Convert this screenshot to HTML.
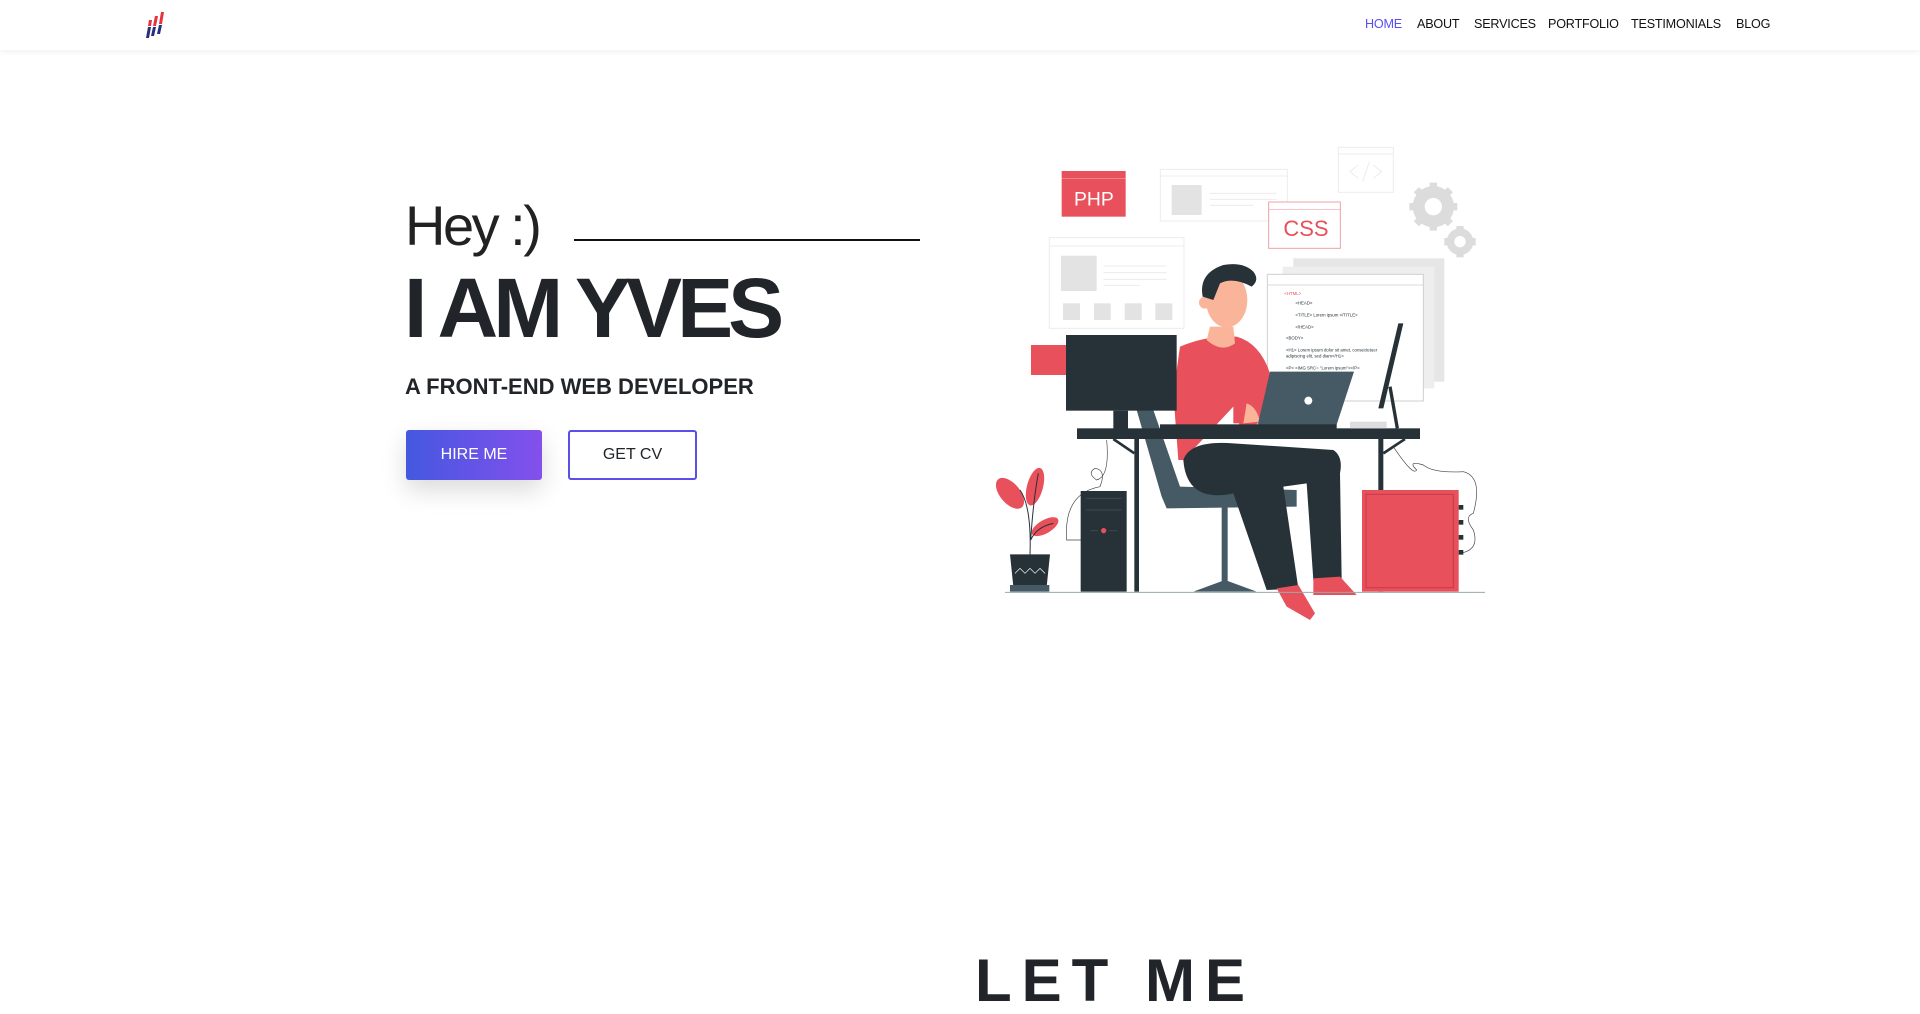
<!DOCTYPE html>
<html><head><meta charset="utf-8"><style>
*{margin:0;padding:0;box-sizing:border-box}
body{width:1920px;height:966px;overflow:hidden;background:#fff;font-family:"Liberation Sans",Arial,sans-serif;color:#212529;position:relative}
.hdr{position:absolute;left:0;top:0;width:1920px;height:50px;background:#fff;box-shadow:0 2px 6px rgba(0,0,0,.06)}
.nav a{position:absolute;top:17px;font-size:12.6px;color:#111;text-decoration:none;letter-spacing:-0.2px}
.abs{position:absolute;white-space:nowrap}
.btn{position:absolute;top:430px;height:50px;display:flex;align-items:center;justify-content:center;font-size:16px;border-radius:3px}
</style></head><body>
<div class="hdr">
<svg class="abs" style="left:146px;top:10px" width="26" height="30" viewBox="0 0 26 30">
<polygon points="3,10 6,10 5,16 2,16" fill="#e8323c"/><polygon points="9,6 12,6 10,16 7,16" fill="#e8323c"/><polygon points="15,2 18,2 16,14 13,14" fill="#e8323c"/>
<polygon points="2,17 5,17 3,28 0,28" fill="#23307a"/><polygon points="7,17 10,17 8,26 5,26" fill="#23307a"/><polygon points="13,15 16,15 14,24 11,24" fill="#23307a"/>
</svg>
<div class="nav">
<a style="left:1365px;color:#5b4ef0">HOME</a>
<a style="left:1417px">ABOUT</a>
<a style="left:1474px">SERVICES</a>
<a style="left:1548px">PORTFOLIO</a>
<a style="left:1631px">TESTIMONIALS</a>
<a style="left:1736px">BLOG</a>
</div>
</div>

<div class="abs" style="left:405px;top:198px;font-size:56px;letter-spacing:-2.5px;line-height:1;color:#222">Hey :)</div>
<div class="abs" style="left:574px;top:239px;width:346px;height:2px;background:#111"></div>
<div class="abs" style="left:404px;top:266px;font-size:84px;font-weight:bold;letter-spacing:-5px;line-height:1;color:#212529">I AM YVES</div>
<div class="abs" style="left:405px;top:376px;font-size:22px;font-weight:bold;letter-spacing:0;line-height:1;color:#212529">A FRONT-END WEB DEVELOPER</div>
<div class="btn" style="left:406px;width:136px;background:linear-gradient(90deg,#4458e0,#8450ec);color:#fff;box-shadow:0 10px 25px rgba(0,0,0,.15)">HIRE ME</div>
<div class="btn" style="left:568px;width:129px;border:2px solid #5a4fe6;color:#212529;background:#fff">GET CV</div>

<svg class="abs" style="left:980px;top:140px" width="520" height="490" viewBox="0 0 1560 1470">
<g fill="none" stroke="#ececec" stroke-width="3">
<rect x="541" y="88" width="381" height="155"/><rect x="1075" y="22" width="165" height="135"/><rect x="208" y="293" width="404" height="272"/>
<line x1="541" y1="108" x2="922" y2="108"/><line x1="1075" y1="42" x2="1240" y2="42"/><line x1="208" y1="318" x2="612" y2="318"/>
<line x1="690" y1="160" x2="890" y2="160"/><line x1="690" y1="178" x2="890" y2="178"/><line x1="690" y1="196" x2="820" y2="196"/>
<line x1="370" y1="378" x2="560" y2="378"/><line x1="370" y1="398" x2="560" y2="398"/><line x1="370" y1="418" x2="560" y2="418"/><line x1="370" y1="436" x2="480" y2="436"/>
<polyline points="1135,75 1110,95 1135,115"/><polyline points="1180,75 1205,95 1180,115"/><line x1="1168" y1="65" x2="1148" y2="125"/>
</g>
<g fill="#e3e3e3"><rect x="575" y="135" width="90" height="90"/><rect x="243" y="347" width="107" height="106"/>
<rect x="249" y="490" width="51" height="50"/><rect x="342" y="490" width="50" height="50"/><rect x="434" y="490" width="51" height="50"/><rect x="526" y="490" width="51" height="50"/></g>
<g fill="#dcdcdc">
<circle cx="1360" cy="200" r="62"/><circle cx="1440" cy="305" r="40"/>
<g stroke="#dcdcdc" stroke-width="22"><line x1="1360" y1="128" x2="1360" y2="272"/><line x1="1288" y1="200" x2="1432" y2="200"/><line x1="1309" y1="149" x2="1411" y2="251"/><line x1="1411" y1="149" x2="1309" y2="251"/>
<line x1="1440" y1="258" x2="1440" y2="352"/><line x1="1393" y1="305" x2="1487" y2="305"/></g></g>
<circle cx="1360" cy="200" r="26" fill="#fff"/><circle cx="1440" cy="305" r="17" fill="#fff"/>
<rect x="940" y="355" width="453" height="370" fill="#e6e6e6"/><rect x="908" y="380" width="455" height="365" fill="#eeeeee"/>
<rect x="245" y="93" width="192" height="137" fill="#e8505b"/><line x1="245" y1="115" x2="437" y2="115" stroke="#f8a0a6" stroke-width="2"/>
<text x="282" y="196" font-family="Liberation Sans" font-size="58" fill="#fff">PHP</text>
<rect x="866" y="186" width="215" height="139" fill="#fff" stroke="#f0a0a6" stroke-width="3"/><line x1="866" y1="208" x2="1081" y2="208" stroke="#f0a0a6" stroke-width="2"/>
<text x="910" y="288" font-family="Liberation Sans" font-size="66" fill="#e8505b">CSS</text>
<rect x="153" y="615" width="107" height="90" fill="#e8505b"/>
<rect x="862" y="403" width="468" height="380" fill="#fff" stroke="#cfcfcf" stroke-width="3"/><line x1="862" y1="435" x2="1330" y2="435" stroke="#cfcfcf" stroke-width="2"/>
<g font-family="Liberation Sans" font-size="13" fill="#263238">
<text x="913" y="465" fill="#e8505b">&lt;HTML&gt;</text><text x="946" y="494">&lt;HEAD&gt;</text><text x="946" y="530">&lt;TITLE&gt; Lorem ipsum &lt;/TITLE&gt;</text>
<text x="946" y="566">&lt;/HEAD&gt;</text><text x="918" y="598">&lt;BODY&gt;</text><text x="918" y="634">&lt;H1&gt; Lorem ipsum dolor sit amet, consectetuer</text>
<text x="918" y="652">adipiscing elit, sed diam&lt;/H1&gt;</text><text x="918" y="688">&lt;P&gt; &lt;IMG SRC= "Lorem ipsum"&gt;&lt;/P&gt;</text></g>
<polygon points="1255,550 1270,550 1210,805 1195,805" fill="#263238"/><line x1="1230" y1="740" x2="1252" y2="865" stroke="#263238" stroke-width="10"/>
<polygon points="470,810 520,810 600,1040 950,1050 950,1100 560,1105 545,1070" fill="#455a64"/>
<rect x="725" y="1100" width="18" height="230" fill="#455a64"/><polygon points="640,1355 830,1355 735,1320" fill="#455a64"/>
<path d="M600,620 Q680,585 770,590 Q840,610 870,700 L880,760 L830,855 L780,860 L760,800 L610,960 L595,960 L580,760 Z" fill="#e8505b"/>
<path d="M690,560 L760,560 L765,610 Q725,640 680,600 Z" fill="#f9b499"/>
<ellipse cx="740" cy="480" rx="62" ry="82" fill="#f9b499"/><circle cx="675" cy="488" r="18" fill="#f9b499"/>
<path d="M668,470 Q655,400 730,375 Q790,365 820,395 Q840,420 815,440 Q760,410 720,430 L700,480 Z" fill="#263238"/>
<path d="M610,960 Q630,900 760,910 L1060,930 Q1090,950 1080,1000 L1085,1320 L1000,1320 L980,1030 L910,1040 L955,1345 L860,1350 L760,1060 Q620,1090 610,960 Z" fill="#263238"/>
<polygon points="890,1345 955,1335 1005,1420 990,1440 920,1400" fill="#e8505b"/><polygon points="1000,1315 1080,1310 1130,1365 1000,1365" fill="#e8505b"/>
<rect x="760" y="775" width="50" height="75" fill="#e8505b"/><path d="M800,790 Q830,800 840,845 L790,850 Z" fill="#f9b499"/>
<polygon points="870,695 1122,695 1068,860 832,860" fill="#455a64"/><circle cx="985" cy="782" r="12" fill="#fff"/>
<rect x="540" y="853" width="530" height="14" fill="#263238"/>
<rect x="258" y="585" width="332" height="227" fill="#263238"/><rect x="400" y="812" width="44" height="55" fill="#263238"/>
<rect x="291" y="865" width="1029" height="32" fill="#263238"/><rect x="1110" y="845" width="110" height="20" fill="#ddd"/>
<rect x="463" y="897" width="14" height="458" fill="#263238"/><rect x="1195" y="897" width="15" height="458" fill="#263238"/>
<line x1="400" y1="897" x2="463" y2="940" stroke="#263238" stroke-width="8"/><line x1="1275" y1="897" x2="1210" y2="940" stroke="#263238" stroke-width="8"/>
<g fill="none" stroke="#444" stroke-width="2"><path d="M380,900 Q390,1010 350,1020 Q320,1000 345,985 Q380,990 360,1040 Q250,1060 260,1200 L305,1200"/>
<path d="M1240,920 Q1300,1010 1310,990 Q1280,960 1330,975 Q1360,1000 1450,995 Q1510,1010 1480,1120 Q1450,1130 1480,1170 Q1500,1230 1440,1240"/></g>
<rect x="302" y="1053" width="138" height="302" fill="#263238"/><g stroke="#3d4a50" stroke-width="3"><line x1="318" y1="1075" x2="425" y2="1075"/><line x1="318" y1="1110" x2="425" y2="1110"/><line x1="330" y1="1172" x2="355" y2="1172"/><line x1="387" y1="1172" x2="412" y2="1172"/></g>
<circle cx="371" cy="1172" r="8" fill="#e8505b"/>
<rect x="1146" y="1050" width="290" height="305" fill="#e8505b"/><rect x="1158" y="1063" width="262" height="280" fill="none" stroke="#c43c46" stroke-width="3"/>
<g fill="#263238"><rect x="1436" y="1095" width="14" height="14"/><rect x="1436" y="1140" width="14" height="14"/><rect x="1436" y="1185" width="14" height="14"/><rect x="1436" y="1230" width="14" height="14"/></g>
<g fill="#e8505b"><ellipse cx="90" cy="1060" rx="30" ry="55" transform="rotate(-40 90 1060)"/><ellipse cx="165" cy="1040" rx="24" ry="58" transform="rotate(15 165 1040)"/><ellipse cx="195" cy="1160" rx="20" ry="45" transform="rotate(60 195 1160)"/></g>
<path d="M150,1245 Q155,1100 120,1050 M152,1200 Q160,1080 175,1000 M152,1200 Q170,1160 220,1150" fill="none" stroke="#263238" stroke-width="3"/>
<polygon points="90,1243 210,1243 200,1340 100,1340" fill="#263238"/><rect x="90" y="1335" width="118" height="20" fill="#455a64"/>
<polyline points="105,1300 120,1285 135,1300 150,1285 165,1300 180,1285 195,1300" fill="none" stroke="#fff" stroke-width="2"/>
<line x1="75" y1="1357" x2="1515" y2="1357" stroke="#9aa" stroke-width="3"/>
</svg>

<div class="abs" style="left:975px;top:951px;font-size:60px;font-weight:bold;letter-spacing:10px;line-height:1;color:#212529">LET ME</div>
</body></html>
